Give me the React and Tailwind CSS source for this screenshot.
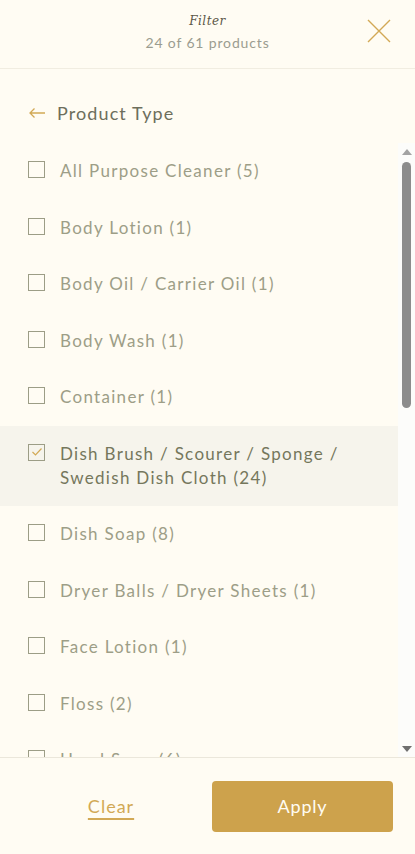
import React from "react";

const items = [
  ["All Purpose Cleaner", 5],
  ["Body Lotion", 1],
  ["Body Oil / Carrier Oil", 1],
  ["Body Wash", 1],
  ["Container", 1],
  ["Dish Brush / Scourer / Sponge / Swedish Dish Cloth", 24, true],
  ["Dish Soap", 8],
  ["Dryer Balls / Dryer Sheets", 1],
  ["Face Lotion", 1],
  ["Floss", 2],
  ["Hand Soap", 6],
  ["Laundry Detergent", 3],
];

export default function App() {
  return (
    <div
      className="w-[415px] h-[854px] bg-[#fffcf3] flex flex-col overflow-hidden"
      style={{ fontFamily: "Lato, 'Open Sans', sans-serif" }}
    >
      {/* header */}
      <div className="h-[69px] shrink-0 border-b border-[#f1ede1] relative flex flex-col items-center pt-[13px]">
        <div className="text-[12px] leading-[16px] italic text-[#5b5747] tracking-[0.5px]" style={{ fontFamily: "'DejaVu Serif', serif" }}>
          Filter
        </div>
        <div className="text-[14px] leading-[18px] mt-[5px] text-[#9b9c90] tracking-[0.85px]">24 of 61 products</div>
        <svg className="absolute left-[367px] top-[19px]" width="24" height="24" viewBox="0 0 24 24">
          <path d="M1 1 L23 23 M23 1 L1 23" stroke="#d2a955" strokeWidth="1.4" fill="none" />
        </svg>
      </div>

      {/* product type */}
      <div className="h-[74px] shrink-0 flex items-center pl-[28px] pt-[14px]">
        <svg width="18" height="12" viewBox="0 0 18 12" className="mr-[11px]">
          <path d="M17 6 H2 M6.5 1.5 L2 6 L6.5 10.5" stroke="#d2a955" strokeWidth="1.3" fill="none" />
        </svg>
        <span className="text-[18px] text-[#6d6e5c] tracking-[1.1px]">Product Type</span>
      </div>

      {/* list + scrollbar */}
      <div className="flex-1 flex min-h-0">
        <div className="flex-1 overflow-hidden">
          {items.map(([label, n, sel]) => (
            <div
              key={label}
              className={`flex items-start pl-[28px] pr-[40px] py-[16.25px] ${sel ? "bg-[#f6f4ec]" : ""}`}
            >
              <div className="w-[17px] h-[17px] mt-[2px] shrink-0 border-[1.5px] border-[#9c9d86] flex items-center justify-center">
                {sel && (
                  <svg width="12" height="10" viewBox="0 0 12 10">
                    <path d="M1.5 5 L4.5 8 L10.5 1.5" stroke="#d2a955" strokeWidth="1.2" fill="none" />
                  </svg>
                )}
              </div>
              <div
                className={`ml-[15px] text-[17px] leading-[24px] tracking-[1.3px] ${sel ? "text-[#75775c]" : "text-[#9d9e87]"}`}
              >
                {label} ({n})
              </div>
            </div>
          ))}
        </div>
        <div className="w-[17px] shrink-0 bg-[#fcfcfa] flex flex-col items-center pt-[6px] pb-[5px]">
          <svg width="10" height="6" viewBox="0 0 10 6">
            <path d="M5 0 L10 6 H0 Z" fill="#a3a3a3" />
          </svg>
          <div className="flex-1 w-full flex flex-col items-center pt-[7px]">
            <div className="w-[9px] h-[246px] rounded-full bg-[#8c8c8c]" />
          </div>
          <svg width="10" height="6" viewBox="0 0 10 6">
            <path d="M0 0 H10 L5 6 Z" fill="#6f6f6f" />
          </svg>
        </div>
      </div>

      {/* footer */}
      <div className="h-[97px] shrink-0 border-t border-[#ebe7db] flex items-center pl-[20px] pr-[22px] pt-[1px]">
        <div className="w-[182px] mr-[10px] flex justify-center">
          <span className="text-[18px] text-[#d2a955] underline underline-offset-[5px] decoration-[1.5px] tracking-[1px]">Clear</span>
        </div>
        <div className="flex-1 h-[51px] rounded-[4px] bg-[#cda24c] flex items-center justify-center text-[18px] text-[#fffcf3] tracking-[0.8px]">
          Apply
        </div>
      </div>
    </div>
  );
}
